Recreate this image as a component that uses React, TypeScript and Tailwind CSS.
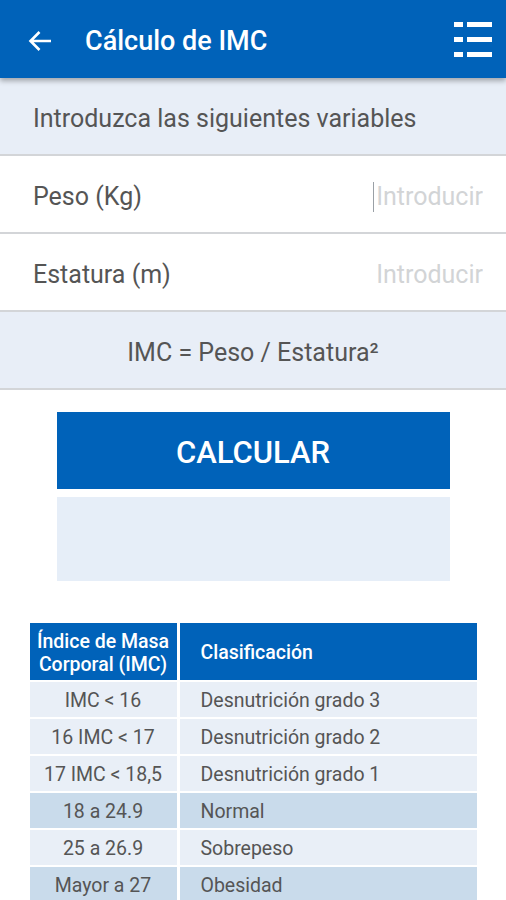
import React from 'react';

const rows = [
  { imc: 'IMC < 16', label: 'Desnutrición grado 3', dark: false },
  { imc: '16 IMC < 17', label: 'Desnutrición grado 2', dark: false },
  { imc: '17 IMC < 18,5', label: 'Desnutrición grado 1', dark: false },
  { imc: '18 a 24.9', label: 'Normal', dark: true },
  { imc: '25 a 26.9', label: 'Sobrepeso', dark: false },
  { imc: 'Mayor a 27', label: 'Obesidad', dark: true },
];

function MenuIcon() {
  return (
    <svg width="38" height="36" viewBox="0 0 38 36" className="shrink-0">
      <rect x="0" y="0" width="9" height="5" fill="#fff" />
      <rect x="13" y="0" width="25" height="5" fill="#fff" />
      <rect x="0" y="15" width="9" height="5" fill="#fff" />
      <rect x="13" y="15" width="25" height="5" fill="#fff" />
      <rect x="0" y="30" width="9" height="5" fill="#fff" />
      <rect x="13" y="30" width="25" height="5" fill="#fff" />
    </svg>
  );
}

function InputRow({ label, focused }: { label: string; focused?: boolean }) {
  const [value, setValue] = React.useState('');
  return (
    <div className="h-[78px] bg-white border-b-2 border-[#d3d5d8] flex items-center pl-[33px] pr-[23px]">
      <span className="text-[25px] text-[#555] mt-[5px]">{label}</span>
      <div className="ml-auto flex items-center mt-[5px]">
        {focused && <div className="w-[1px] h-[30px] bg-[#9aa0a6] mr-[1px]" />}
        <input
          value={value}
          onChange={(e) => setValue(e.target.value)}
          placeholder="Introducir"
          className="w-[108px] text-right text-[25px] text-[#555] placeholder:text-[#d2d4d6] outline-none bg-transparent"
        />
      </div>
    </div>
  );
}

export default function App() {
  return (
    <div className="w-[506px] h-[900px] overflow-hidden bg-white font-['Roboto',sans-serif]">
      <div className="relative z-10 h-[78px] bg-[#0062b9] flex items-center pl-[28px] pr-[14px] shadow-[0_3px_5px_rgba(0,0,0,0.3)]">
        <svg width="24" height="22" viewBox="0 0 24 22" className="shrink-0 mt-[3px]">
          <path d="M23 11H3M11.5 2L2.5 11l9 9" stroke="#fff" strokeWidth="2.6" fill="none" />
        </svg>
        <h1 className="ml-[33px] mt-[4px] text-[27px] font-medium text-white">Cálculo de IMC</h1>
        <div className="ml-auto mt-[2px]">
          <MenuIcon />
        </div>
      </div>

      <div className="h-[78px] bg-[#e8eef7] border-b-2 border-[#d3d5d8] flex items-center pl-[33px]">
        <span className="text-[25px] text-[#555] mt-[5px]">Introduzca las siguientes variables</span>
      </div>
      <InputRow label="Peso (Kg)" focused />
      <InputRow label="Estatura (m)" />
      <div className="h-[78px] bg-[#e8eef7] border-b-2 border-[#d3d5d8] flex items-center justify-center">
        <span className="text-[25px] text-[#555] mt-[5px]">IMC = Peso / Estatura²</span>
      </div>

      <button className="block mx-auto mt-[22px] w-[393px] h-[77px] pt-[5px] bg-[#0062b9] text-white text-[31px] font-medium">
        CALCULAR
      </button>
      <div className="mx-auto mt-[8px] w-[393px] h-[84px] bg-[#e6eef8]" />

      <div className="mx-auto mt-[42px] w-[447px] grid grid-cols-[147px_1fr] gap-x-[3px] gap-y-[2px]">
        <div className="h-[57px] pt-[2px] bg-[#0062b9] flex flex-col items-center justify-center text-white text-[19.5px] font-medium leading-[23px]">
          <span>Índice de Masa</span>
          <span>Corporal (IMC)</span>
        </div>
        <div className="h-[57px] pt-[3px] bg-[#0062b9] flex items-center pl-[21px] text-white text-[19.5px] font-medium">
          Clasificación
        </div>
        {rows.map((r) => (
          <React.Fragment key={r.imc}>
            <div className={`h-[35px] pt-[3px] flex items-center justify-center text-[19.5px] text-[#555] ${r.dark ? 'bg-[#c9dbeb]' : 'bg-[#e9eff7]'}`}>
              {r.imc}
            </div>
            <div className={`h-[35px] pt-[3px] flex items-center pl-[21px] text-[19.5px] text-[#555] ${r.dark ? 'bg-[#c9dbeb]' : 'bg-[#e9eff7]'}`}>
              {r.label}
            </div>
          </React.Fragment>
        ))}
      </div>
    </div>
  );
}
